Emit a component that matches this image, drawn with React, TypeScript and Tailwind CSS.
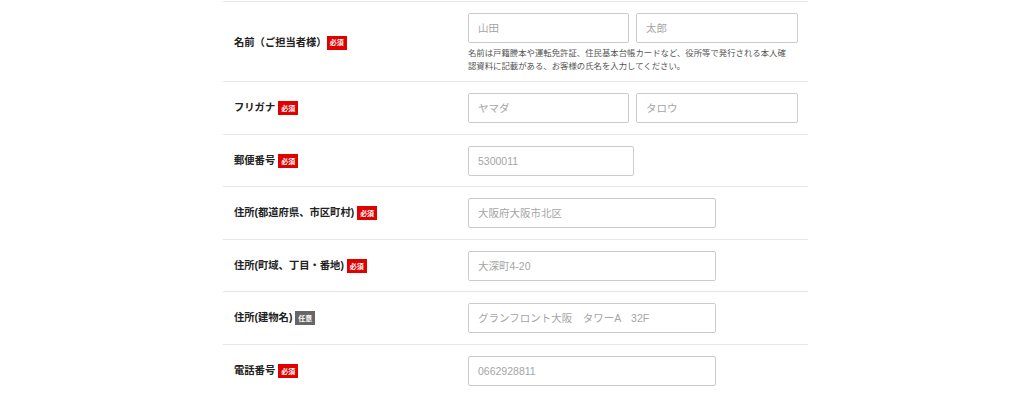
import React from "react";

const font = { fontFamily: '"Liberation Sans", "Noto Sans CJK JP", sans-serif' };

const Badge = ({ required = true }: { required?: boolean }) => (
  <span
    className={`inline-flex h-[14px] w-[20px] items-center justify-center text-[7px] font-bold leading-none text-white ${
      required ? "bg-[#e00000]" : "bg-[#666666]"
    }`}
  >
    {required ? "必須" : "任意"}
  </span>
);

const Input = ({ placeholder, width }: { placeholder: string; width: string }) => (
  <input
    type="text"
    placeholder={placeholder}
    className={`h-[30px] ${width} rounded-[2px] border border-[#cccccc] bg-white px-[9px] text-[10.5px] text-[#333] outline-none placeholder:text-[#a5a5a5]`}
  />
);

const Row = ({
  label,
  required = true,
  pad = "py-[11px]",
  children,
}: {
  label: string;
  required?: boolean;
  pad?: string;
  children: React.ReactNode;
}) => (
  <div className={`flex items-center border-t border-[#e6e6e6] ${pad}`}>
    <div className="flex w-[245px] items-center gap-[3px] pl-[11px]">
      <span className="text-[10.3px] font-bold text-[#222]">{label}</span>
      <Badge required={required} />
    </div>
    <div className="flex-1">{children}</div>
  </div>
);

export default function App() {
  return (
    <div className="min-h-[397px] bg-white pt-px" style={font}>
      <div className="ml-[223px] w-[585px]">
        {/* name */}
        <div className="flex items-center border-t border-[#e6e6e6] pt-[11px] pb-[9px]">
          <div className="flex w-[245px] items-center gap-0 pl-[11px]">
            <span className="text-[10.3px] font-bold text-[#222]">名前（ご担当者様）</span>
            <Badge />
          </div>
          <div className="flex-1">
            <div className="flex gap-[7px]">
              <Input placeholder="山田" width="w-[161px]" />
              <Input placeholder="太郎" width="w-[162px]" />
            </div>
            <p className="mt-[4px] w-[322px] text-[8.4px] leading-[12.5px] text-[#555]">
              名前は戸籍謄本や運転免許証、住民基本台帳カードなど、役所等で発行される本人確認資料に記載がある、お客様の氏名を入力してください。
            </p>
          </div>
        </div>

        <Row label="フリガナ">
          <div className="flex gap-[7px]">
            <Input placeholder="ヤマダ" width="w-[161px]" />
            <Input placeholder="タロウ" width="w-[162px]" />
          </div>
        </Row>

        <Row label="郵便番号" pad="pt-[11px] pb-[10px]">
          <Input placeholder="5300011" width="w-[166px]" />
        </Row>

        <Row label="住所(都道府県、市区町村)">
          <Input placeholder="大阪府大阪市北区" width="w-[248px]" />
        </Row>

        <Row label="住所(町域、丁目・番地)" pad="pt-[11px] pb-[10px]">
          <Input placeholder="大深町4-20" width="w-[248px]" />
        </Row>

        <Row label="住所(建物名)" required={false}>
          <Input placeholder="グランフロント大阪　タワーA　32F" width="w-[248px]" />
        </Row>

        <Row label="電話番号">
          <Input placeholder="0662928811" width="w-[248px]" />
        </Row>
      </div>
    </div>
  );
}
